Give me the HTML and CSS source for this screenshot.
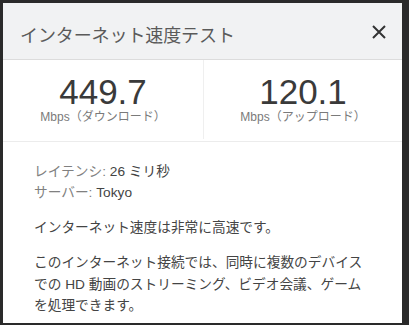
FILE: index.html
```html
<!DOCTYPE html>
<html lang="ja">
<head>
<meta charset="utf-8">
<link rel="stylesheet" href="styles.css">
</head>
<body>
<div class="dialog">
  <div class="header">
    <div class="title">インターネット速度テスト</div>
    <div class="close" aria-label="閉じる">
      <svg width="14" height="14" viewBox="0 0 14 14"><path d="M1 1L13 13M13 1L1 13" stroke="#333" stroke-width="2" fill="none"/></svg>
    </div>
  </div>
  <div class="stats">
    <div class="stat">
      <div class="num">449.7</div>
      <div class="unit">Mbps（ダウンロード）</div>
    </div>
    <div class="stat second">
      <div class="num">120.1</div>
      <div class="unit">Mbps（アップロード）</div>
    </div>
  </div>
  <div class="content">
    <div class="meta">
      <div><span class="lbl">レイテンシ:</span> <span class="val">26 ミリ秒</span></div>
      <div><span class="lbl">サーバー:</span> <span class="val">Tokyo</span></div>
    </div>
    <p class="summary">インターネット速度は非常に高速です。</p>
    <p class="desc">このインターネット接続では、同時に複数のデバイスでの HD 動画のストリーミング、ビデオ会議、ゲームを処理できます。</p>
  </div>
</div>
</body>
</html>
```
FILE: styles.css
```css
html, body {
  margin: 0;
  height: 100%;
}
body {
  background: #2a2a2a;
  padding: 3px 7px 2px 3px;
  box-sizing: border-box;
  font-family: "Liberation Sans", "Noto Sans CJK JP", sans-serif;
}
.dialog {
  background: #fff;
  height: 100%;
  overflow: hidden;
}
.header {
  height: 57px;
  box-sizing: border-box;
  background: #f1f2f3;
  border-bottom: 1px solid #dcdcdc;
  display: flex;
  align-items: center;
  justify-content: space-between;
  padding: 6px 16px 0 17px;
}
.title {
  font-size: 18px;
  color: #5a5a5a;
  letter-spacing: -0.1px;
}
.close {
  width: 14px;
  height: 14px;
  margin-top: -5px;
  display: flex;
}
.stats {
  display: grid;
  grid-template-columns: 200px 1fr;
  border-bottom: 1px solid #ececec;
}
.stat {
  text-align: center;
  padding: 15px 0 14px;
}
.second {
  border-left: 1px solid #efefef;
  margin-bottom: 2px;
}
.num {
  font-size: 35px;
  line-height: 34px;
  color: #3a3a3a;
}
.unit {
  font-size: 12px;
  line-height: 15px;
  color: #7a7a7a;
  margin-top: 1px;
}
.content {
  padding: 19px 20px 0 31px;
  font-size: 13.7px;
  color: #444;
}
.meta {
  line-height: 21px;
}
.lbl {
  color: #808080;
}
.val {
  color: #444;
}
.summary {
  margin: 14px 0 0;
  line-height: 21.3px;
}
.desc {
  margin: 14px 0 0;
  line-height: 21.3px;
  width: 340px;
}
```
